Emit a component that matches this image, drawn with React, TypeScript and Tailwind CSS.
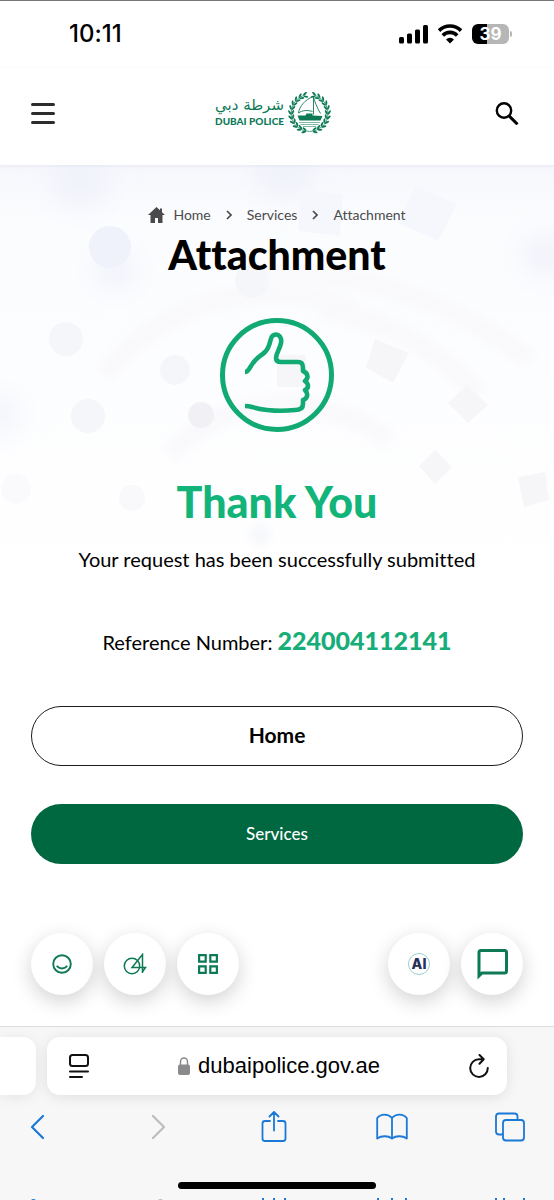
import type { ReactNode } from "react";

interface Crumb {
  label: string;
  href: string;
}

const crumbs: Crumb[] = [
  { label: "Home", href: "#home" },
  { label: "Services", href: "#services" },
  { label: "Attachment", href: "#attachment" },
];

const leafAngles = [18, 33, 48, 63, 78, 93, 108, 123, 138, 153, 168];

function StatusBar() {
  return (
    <div className="flex h-17 items-center justify-between border-t border-[#77757a] pr-[42px] pb-0.5 pl-[69px] font-['Inter',sans-serif]">
      <span className="text-[24px] font-medium leading-7">10:11</span>
      <div className="flex items-center gap-2.5">
        <svg className="h-5 w-[29px]" viewBox="0 0 29 20">
          <rect x="0" y="13" width="5" height="6.500" rx="1.5" />
          <rect x="8" y="9.500" width="5" height="10" rx="1.5" />
          <rect x="16" y="5.500" width="5" height="14" rx="1.5" />
          <rect x="24" y="1" width="5" height="18.500" rx="1.5" />
        </svg>
        <svg className="h-5 w-6" viewBox="0 0 24 20">
          <path d="M1 6.600a15.600 15.600 0 0 1 22 0" fill="none" stroke="#000" strokeWidth="3.600" />
          <path d="M4.800 11.400a10.200 10.200 0 0 1 14.400 0" fill="none" stroke="#000" strokeWidth="3.600" />
          <path d="M12 19.400 8 15.400a5.800 5.800 0 0 1 8 0z" />
        </svg>
        <div className="flex items-center gap-px">
          <div className="flex h-5 w-[37px] items-center justify-center rounded-md bg-[linear-gradient(to_right,#000_40%,#b6b6b6_40%)] text-[17px] font-bold leading-5 text-white">
            39
          </div>
          <div className="h-1.5 w-0.5 rounded-r-full bg-[#b6b6b6]" />
        </div>
      </div>
    </div>
  );
}

function Emblem() {
  return (
    <svg className="h-[42px] w-[43px]" viewBox="0 0 43 42" fill="#0d7a55">
      {[1, -1].map((side) => (
        <g key={side} transform={`translate(21.5 21) scale(${side} 1)`}>
          <path d="M6 -17.500A18.500 18.500 0 0 1 0 18.500" fill="none" stroke="#0d7a55" strokeWidth=".7" />
          {leafAngles.map((a) => (
            <g key={a} transform={`rotate(${a}) translate(0 -18.300)`}>
              <ellipse cx="-1.6" cy="-1.4" rx="2.5" ry="1" transform="rotate(28 -1.6 -1.4)" />
              <ellipse cx="-1.6" cy="1.6" rx="2.5" ry="1" transform="rotate(-28 -1.6 1.6)" />
            </g>
          ))}
        </g>
      ))}
      <path d="M25.500 4.500v18M25 4.500C17 8 11.500 14 10.500 21c4-3 9.500-3 14-1.500M25.500 5c1.500 5 3 10 7 16.500" fill="none" stroke="#0d7a55" strokeWidth=".9" />
      <path d="M9.500 23.500h8l1-2h6v2l10 .5-2 4.500h-21z" />
      <path d="M11 30.500h21M12.500 32.500h18M15 34.500h13" stroke="#0d7a55" strokeWidth=".8" opacity=".65" />
    </svg>
  );
}

function Header() {
  return (
    <header className="relative z-10 flex h-[97px] items-center justify-between pr-[35px] pb-[7px] pl-[31px] shadow-[0_1px_3px_rgba(60,60,100,0.08)]">
      <button type="button" aria-label="Menu" className="flex w-6 flex-col gap-1.5">
        <span className="h-[3px] rounded-full bg-[#2c2c2c]" />
        <span className="h-[3px] rounded-full bg-[#2c2c2c]" />
        <span className="h-[3px] rounded-full bg-[#2c2c2c]" />
      </button>
      <a href="#dubai-police" className="flex items-center gap-1 pr-1 text-[#0d7a55]">
        <span className="flex flex-col items-center">
          <span lang="ar" dir="rtl" className="font-['DejaVu_Sans',sans-serif] text-[15px] leading-4">
            شرطة دبي
          </span>
          <span className="font-['Lato',sans-serif] text-[10px] font-black leading-4">DUBAI POLICE</span>
        </span>
        <Emblem />
      </a>
      <button type="button" aria-label="Search">
        <svg className="size-6" viewBox="0 0 24 24" fill="none" stroke="#000" strokeWidth="2.400">
          <circle cx="9" cy="9.500" r="7.200" />
          <path d="m14 14.800 8.500 8.500" strokeWidth="3" />
        </svg>
      </button>
    </header>
  );
}

function Backdrop() {
  return (
    <svg className="absolute inset-x-0 top-0 -z-10 h-[450px] w-full" viewBox="0 0 554 450" preserveAspectRatio="xMidYMin slice">
      <defs>
        <linearGradient id="wash" x1="0" y1="0" x2="0" y2="1">
          <stop offset="0" stopColor="#f6f7fc" />
          <stop offset=".12" stopColor="#fbfcfe" />
          <stop offset="1" stopColor="#fff" />
        </linearGradient>
        <filter id="soft" x="-100%" y="-100%" width="300%" height="300%">
          <feGaussianBlur stdDeviation="14" />
        </filter>
        <filter id="edge" x="-20%" y="-20%" width="140%" height="140%">
          <feGaussianBlur stdDeviation="4" />
        </filter>
      </defs>
      <rect width="554" height="450" fill="url(#wash)" />
      <g fill="#f0f2fa" filter="url(#soft)">
        <circle cx="80" cy="15" r="28" />
        <circle cx="285" cy="5" r="28" />
        <circle cx="115" cy="105" r="20" />
        <circle cx="0" cy="250" r="18" />
        <circle cx="545" cy="90" r="22" />
      </g>
      <g fill="none" stroke="#f9f9fc" strokeWidth="20" filter="url(#edge)">
        <path d="M105 210C165 130 275 110 355 145" />
        <path d="M320 145q90 10 160 85" />
        <path d="M245 110q150-15 285 85" />
        <path d="M170 290c55-65 150-65 220-15" />
      </g>
      <g fill="#f5f6fa">
        <circle cx="110" cy="82" r="21" fill="#f0f2fb" />
        <circle cx="252" cy="116" r="17" />
        <circle cx="66" cy="174" r="17" />
        <circle cx="175" cy="205" r="15" />
        <circle cx="88" cy="251" r="17" />
        <circle cx="201" cy="250" r="13" fill="#f1f1f5" />
        <circle cx="16" cy="324" r="15" fill="#fafafc" />
        <circle cx="132" cy="333" r="13" fill="#f9f9fb" />
        <path d="m300 25 43 4-3 42-42-5zM415 22l42 17-19 37-40-18z" fill="#f6f7fc" />
        <path d="m375 174 34 14-16 30-27-15zM467 220l21 20-20 18-20-20zM435 285l17 17-17 17-16-18zM518 312l27-5 4 28-25 7zM277 190h29v32h-29z" fill="#f6f6f9" />
      </g>
      <circle cx="260" cy="370" r="11" fill="#f7f8fb" filter="url(#edge)" />
    </svg>
  );
}

function Breadcrumb() {
  return (
    <nav aria-label="Breadcrumb" className="flex items-center justify-center text-[14px] leading-5 text-[#4a4a4c]">
      <svg className="mr-2 h-4 w-[17px]" viewBox="0 0 17 16" fill="#4a4a4c">
        <path d="M8.500 0 0 8h2.500v8H7v-5h3v5h4.500V8H17l-3-2.800V1.500h-2v1.800z" />
      </svg>
      {crumbs.map((crumb, i) => (
        <span key={crumb.label} className="flex items-center">
          {i > 0 && (
            <svg className="mx-[15px] h-2.5 w-1.5" viewBox="0 0 6 10" fill="none" stroke="#4a4a4c" strokeWidth="1.700">
              <path d="m1 1 4 4-4 4" />
            </svg>
          )}
          <a href={crumb.href}>{crumb.label}</a>
        </span>
      ))}
    </nav>
  );
}

function ThumbsUp() {
  return (
    <svg className="size-[114px]" viewBox="0 0 114 114" fill="none" stroke="#12aa73" strokeWidth="5">
      <circle cx="57" cy="57" r="54.500" />
      <path d="M25 54c3 0 4-3 6-6 5-9 9-9 14-14 7-7 4-16 9-17 5-2 8 3 7 8-1 6-5 10-5 15 0 3 2 4 5 4h17c4 0 5 2 5 6v3c5 2 6 7 2 10 4 3 4 7 0 9 4 4 2 9-2 10v4c0 4-3 6-8 6-19 2-32 0-43-3-3-1-5-1-7-1" strokeWidth="4.600" strokeLinejoin="round" />
    </svg>
  );
}

function RoundButton({ label, children }: { label: string; children: ReactNode }) {
  return (
    <button
      type="button"
      aria-label={label}
      className="flex size-[62px] items-center justify-center rounded-full bg-white shadow-[0_6px_20px_rgba(0,0,0,0.18)]"
    >
      {children}
    </button>
  );
}

function FloatingActions() {
  return (
    <div className="flex justify-between">
      <div className="flex gap-[11px]">
        <RoundButton label="Happiness">
          <svg className="size-5" viewBox="0 0 20 20" fill="none" stroke="#0d7a55" strokeWidth="1.900">
            <circle cx="10" cy="10" r="8.800" />
            <path d="M4.800 11.800c2.500 3.500 7.900 3.500 10.400 0" />
          </svg>
        </RoundButton>
        <RoundButton label="Services 04">
          <svg className="h-[22px] w-6" viewBox="0 0 24 22" fill="none" stroke="#0d7a55" strokeWidth="1.500">
            <circle cx="9" cy="13" r="7.700" />
            <path d="M19.500 20V1.500L9 14.500h13.500l-3.500 5" />
          </svg>
        </RoundButton>
        <RoundButton label="All services">
          <svg className="size-5" viewBox="0 0 20 20" fill="none" stroke="#0d7a55" strokeWidth="2.200">
            <path d="M1.100 1.100h6.600v6.600H1.100zM12.300 1.100h6.600v6.600h-6.600zM1.100 12.300h6.600v6.600H1.100zM12.300 12.300h6.600v6.600h-6.600z" />
          </svg>
        </RoundButton>
      </div>
      <div className="flex gap-[11px]">
        <RoundButton label="AI">
          <span className="flex size-[22px] items-center justify-center rounded-full border border-[#9bcfd0] font-['Inter',sans-serif] text-[14px] font-extrabold leading-4 text-[#27305a]">
            AI
          </span>
        </RoundButton>
        <RoundButton label="Chat">
          <svg className="size-[31px]" viewBox="0 0 31 31" fill="none" stroke="#0d7a55" strokeWidth="3">
            <path d="M2 27V3.500q0-2 2-2h23.500q2 0 2 2v18.500q0 2-2 2H5z" strokeLinejoin="miter" />
          </svg>
        </RoundButton>
      </div>
    </div>
  );
}

function BrowserBar() {
  return (
    <footer className="overflow-hidden border-t border-[#dcdcdc] bg-[#f7f7f7] font-['Inter',sans-serif]">
      <div className="flex gap-[11px] pt-2.5 pr-[47px]">
        <div className="h-[58px] w-9 shrink-0 rounded-r-[13px] bg-white shadow-[0_2px_14px_rgba(0,0,0,0.08)]" />
        <div className="flex h-[58px] flex-1 items-center justify-between rounded-[13px] bg-white pr-[18px] pl-[22px] shadow-[0_2px_14px_rgba(0,0,0,0.1)]">
          <button type="button" aria-label="Page settings">
            <svg className="h-6 w-5" viewBox="0 0 20 24" fill="none" stroke="#111" strokeWidth="2" strokeLinecap="round">
              <rect x="1" y="1" width="18" height="11" rx="2.500" />
              <path d="M1 17.500h18M1 23h12" />
            </svg>
          </button>
          <a href="#address" className="flex items-center gap-2 font-['Liberation_Sans',sans-serif] text-[22px] leading-7">
            <svg className="h-[18px] w-3" viewBox="0 0 12 18" fill="#8a8a8c">
              <rect y="7.500" width="12" height="10.500" rx="2" />
              <path d="M2.500 8V4.500a3.500 3.500 0 0 1 7 0V8" fill="none" stroke="#8a8a8c" strokeWidth="1.500" />
            </svg>
            dubaipolice.gov.ae
          </a>
          <button type="button" aria-label="Reload">
            <svg className="h-6 w-5" viewBox="0 0 20 24" fill="none" stroke="#111" strokeWidth="2" strokeLinecap="round" strokeLinejoin="round">
              <path d="M18.800 14A8.800 8.800 0 1 1 10 5.300h4.500M10.500 1l4.200 4.300-4.200 4.500" />
            </svg>
          </button>
        </div>
      </div>
      <div className="flex justify-between pt-4 pr-7 pl-[22px]">
        <button type="button" aria-label="Back">
          <svg className="size-8" viewBox="0 0 32 32" fill="none" stroke="#1a78d6" strokeWidth="2.200" strokeLinecap="round" strokeLinejoin="round">
            <path d="M21 5 10 16l11 11" />
          </svg>
        </button>
        <button type="button" aria-label="Forward">
          <svg className="size-8" viewBox="0 0 32 32" fill="none" stroke="#bcbcbe" strokeWidth="2.200" strokeLinecap="round" strokeLinejoin="round">
            <path d="m13 5 11 11-11 11" />
          </svg>
        </button>
        <button type="button" aria-label="Share">
          <svg className="size-8" viewBox="0 0 32 32" fill="none" stroke="#1a78d6" strokeWidth="1.800" strokeLinecap="round" strokeLinejoin="round">
            <path d="M12 10H7q-2.500 0-2.500 2.500v15Q4.500 30 7 30h18q2.500 0 2.500-2.500v-15Q27.500 10 25 10h-5M16 19.500V1M11.500 5.500 16 1l4.500 4.500" />
          </svg>
        </button>
        <button type="button" aria-label="Bookmarks">
          <svg className="size-8" viewBox="0 0 32 32" fill="none" stroke="#1a78d6" strokeWidth="1.800" strokeLinejoin="round">
            <path d="M16 7C12 2.500 5 2.500 1.200 7v20.500c4-3 11-3 14.800 0 3.800-3 10.800-3 14.800 0V7C27 2.500 20 2.500 16 7v20.500" />
          </svg>
        </button>
        <button type="button" aria-label="Tabs">
          <svg className="size-8" viewBox="0 0 32 32" fill="none" stroke="#1a78d6" strokeWidth="1.800" strokeLinejoin="round">
            <rect x="9" y="9" width="21" height="20.500" rx="3" />
            <path d="M9 23.500H5q-3 0-3-3V5.500q0-3 3-3h15.500q3 0 3 3V9" />
          </svg>
        </button>
      </div>
      <div className="mx-auto mt-[39px] h-[7px] w-[198px] rounded-full bg-black" />
      <div className="mt-[9px] flex justify-between pr-7 pl-[22px]">
        <svg className="h-0.5 w-8" viewBox="0 0 32 2" fill="#1a78d6">
          <path d="M9 2q2-2 5 0z" />
        </svg>
        <svg className="h-0.5 w-8" viewBox="0 0 32 2" fill="#bcbcbe">
          <path d="M18 2q2-2 5 0z" />
        </svg>
        <svg className="h-0.5 w-8" viewBox="0 0 32 2" fill="#1a78d6">
          <path d="M4 0h2v2H4zM15 0h2v2h-2zM26 0h2v2h-2z" />
        </svg>
        <svg className="h-0.5 w-8" viewBox="0 0 32 2" fill="#1a78d6">
          <path d="M1 0h2v2H1zM15 0h2v2h-2zM29 0h2v2h-2z" />
        </svg>
        <svg className="h-0.5 w-8" viewBox="0 0 32 2" fill="#1a78d6">
          <path d="M1 0h2v2H1zM9 0h2v2H9zM29 0h2v2h-2z" />
        </svg>
      </div>
    </footer>
  );
}

export default function App() {
  return (
    <div className="flex min-h-screen flex-col bg-white font-['Lato',sans-serif] text-black [font-variant-ligatures:none]">
      <StatusBar />
      <Header />
      <main className="relative isolate flex flex-1 flex-col px-[31px] pt-10 pb-[31px]">
        <Backdrop />
        <Breadcrumb />
        <h1 className="mt-1.5 text-center text-[41px] font-black leading-12">Attachment</h1>
        <div className="mt-[39px] flex justify-center">
          <ThumbsUp />
        </div>
        <h2 className="mt-[46px] text-center text-[43px] font-black leading-12 text-[#12b47a]">Thank You</h2>
        <p className="mt-[19px] text-center text-[20px] leading-7">Your request has been successfully submitted</p>
        <p className="mt-[51px] text-center text-[20px] leading-8">
          Reference Number: <strong className="text-[25px] font-black text-[#16ad78]">224004112141</strong>
        </p>
        <a
          href="#home"
          className="mt-12 flex h-15 items-center justify-center rounded-full border border-[#1c1c1c] bg-white pb-0.5 text-[21px] font-bold"
        >
          Home
        </a>
        <a
          href="#services"
          className="mt-[38px] mb-[69px] flex h-15 items-center justify-center rounded-full bg-[#006840] text-[17px] font-medium text-white"
        >
          Services
        </a>
        <div className="mt-auto">
          <FloatingActions />
        </div>
      </main>
      <BrowserBar />
    </div>
  );
}
